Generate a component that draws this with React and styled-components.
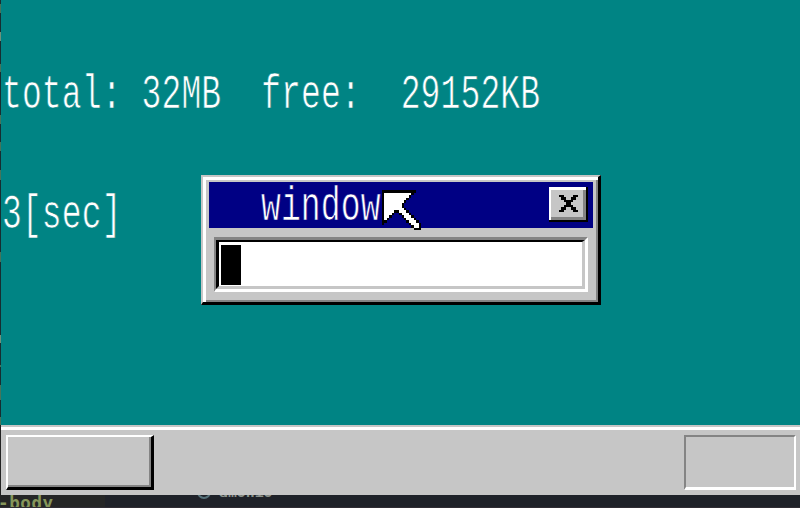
import React from "react";
import styled, { createGlobalStyle } from "styled-components";

const teal = "#008484";
const gray = "#c6c6c6";
const shade = "#848484";
const navy = "#000084";

const Global = createGlobalStyle`
  * { box-sizing: border-box; }
  body { margin: 0; overflow: hidden; background: #202229; }
`;

const Screen = styled.div`
  position: relative;
  width: 800px;
  height: 508px;
  overflow: hidden;
  display: flex;
  flex-direction: column;
  background: #202229;
`;

const Monitor = styled.div`
  height: 495px;
  display: flex;
`;

const Edge = styled.div`
  width: 1px;
  flex: none;
  background: linear-gradient(#172d31 0 4px, #47745a 4px 13px, #172d31 13px 32px, #70927b 32px 41px, #172d31 41px 64px, #47745a 64px 72px, #172d31 72px 115px, #47745a 115px 124px, #172d31 124px 142px, #47745a 142px 151px, #172d31 151px 170px, #47745a 170px 180px, #172d31 180px 252px, #47745a 252px 262px, #172d31 262px 335px, #70927b 335px 343px, #172d31 343px 365px, #47745a 365px 367px, #172d31 367px 385px, #47745a 385px 400px, #172d31 400px 417px, #47745a 417px 425px, #222 425px);
`;

const Desktop = styled.div`
  flex: 1;
  display: flex;
  flex-direction: column;
  background: ${teal};
`;

const Console = styled.div`
  flex: 1;
  display: flex;
  flex-direction: column;
  gap: 80px;
  padding: 76px 0 0 1px;
`;

const PixelText = styled.div`
  height: 40px;
  line-height: 40px;
  font-family: "Liberation Mono", monospace;
  font-size: 33px;
  letter-spacing: 0.13px;
  font-variant-ligatures: none;
  white-space: pre;
  color: #fff;
  -webkit-text-stroke: 0.5px ${(p) => p.$back || teal};
  transform: scaleY(1.48);
  transform-origin: 0 50%;
`;

const Taskbar = styled.div`
  height: 68px;
  display: flex;
  justify-content: space-between;
  align-items: flex-start;
  padding: 5px 4px 0 5px;
  background: ${gray};
  border-top: 3px solid #fff;
  box-shadow: 0 -2px 0 ${gray};
`;

const StartButton = styled.div`
  width: 148px;
  height: 55px;
  border: solid;
  border-width: 2px 3px 3px 2px;
  border-color: #fff #000 #000 #fff;
  box-shadow: inset -2px -2px 0 ${shade};
`;

const Tray = styled.div`
  width: 112px;
  height: 55px;
  border: solid;
  border-width: 2px 2px 3px 2px;
  border-color: ${shade} #fff #fff ${shade};
`;

const Win = styled.div`
  position: absolute;
  left: 201px;
  top: 175px;
  width: 400px;
  height: 130px;
  padding: 5px 5px 0 6px;
  background: ${gray};
  border: solid;
  border-width: 2px 3px 3px 2px;
  border-color: ${gray} #000 #000 ${gray};
  box-shadow: inset 3px 3px 0 #fff, inset -2px -2px 0 ${shade};
`;

const TitleBar = styled.div`
  height: 46px;
  display: flex;
  justify-content: space-between;
  align-items: flex-start;
  padding: 5px 5px 0 52px;
  background: ${navy};
`;

const Title = styled.div`
  height: 40px;
  margin-top: 1px;
`;

const CloseIcon = styled.svg`
  width: 39px;
  height: 35px;
  display: block;
`;

const Field = styled.div`
  width: 374px;
  height: 55px;
  margin: 9px 0 0 5px;
  border: solid;
  border-width: 3px 3px 3px 2px;
  border-color: ${shade} #fff #fff ${shade};
`;

const FieldInner = styled.div`
  height: 49px;
  padding: 3px 2px;
  background: #fff;
  border: solid;
  border-width: 2px 3px 3px;
  border-color: #000 ${gray} ${gray} #000;
`;

const Caret = styled.div`
  width: 20px;
  height: 40px;
  background: #000;
`;

const Pointer = styled.svg`
  position: absolute;
  left: 382px;
  top: 190px;
  width: 39px;
  height: 40px;
`;

const Footer = styled.div`
  height: 13px;
  display: flex;
  overflow: hidden;
  background: #1f2229;
  border-bottom: 1px solid #302d34;
`;

const FooterTab = styled.div`
  width: 105px;
  background: #252626;
  color: #86965b;
  font: bold 17.5px/16px "DejaVu Sans Mono", monospace;
  letter-spacing: 0.6px;
  text-indent: -2px;
`;

const FooterPane = styled.div`
  flex: 1;
  display: flex;
  padding-left: 92px;
  gap: 8px;
  color: #8b918b;
  font: bold 14.8px/14px "DejaVu Sans Mono", monospace;
`;

const Ring = styled.div`
  width: 14px;
  height: 14px;
  margin-top: -10px;
  border: 2px solid #56717a;
  border-radius: 50%;
`;

const FooterName = styled.span`
  margin-top: -10px;
`;

const pointerRows = [
  "**************..",
  "*OOOOOOOOOOO*...",
  "*OOOOOOOOOO*....",
  "*OOOOOOOOO*.....",
  "*OOOOOOOO*......",
  "*OOOOOOO*.......",
  "*OOOOOOO*.......",
  "*OOOOOOOO*......",
  "*OOOO**OOO*.....",
  "*OOO*..*OOO*....",
  "*OO*....*OOO*...",
  "*O*......*OOO*..",
  "**........*OOO*.",
  "*..........*OOO*",
  "............*OO*",
  ".............***",
];

const closeRows = [
  "OOOOOOOOOOOOOOO*",
  "OQQQQQQQQQQQQQ$*",
  "OQQQQQQQQQQQQQ$*",
  "OQQQ**QQQQ**QQ$*",
  "OQQQQ**QQ**QQQ$*",
  "OQQQQQ****QQQQ$*",
  "OQQQQQQ**QQQQQ$*",
  "OQQQQQ****QQQQ$*",
  "OQQQQ**QQ**QQQ$*",
  "OQQQ**QQQQ**QQ$*",
  "OQQQQQQQQQQQQQ$*",
  "OQQQQQQQQQQQQQ$*",
  "O$$$$$$$$$$$$$$*",
  "****************",
];

const inks = { "*": "#000", O: "#fff", Q: gray, $: shade };

// Each run of equal cells becomes one rectangle.
function Sprite({ rows }) {
  return rows.flatMap((row, y) =>
    [...row.matchAll(/(.)\1*/g)]
      .filter((m) => inks[m[1]])
      .map((m) => (
        <rect
          key={`${y}-${m.index}`}
          x={m.index}
          y={y}
          width={m[0].length}
          height="1"
          fill={inks[m[1]]}
          shapeRendering="crispEdges"
        />
      ))
  );
}

export default function App() {
  return (
    <Screen>
      <Global />
      <Monitor>
        <Edge />
        <Desktop>
          <Console>
            <PixelText>{"total: 32MB  free:  29152KB"}</PixelText>
            <PixelText>3[sec]</PixelText>
          </Console>
          <Taskbar>
            <StartButton />
            <Tray />
          </Taskbar>
        </Desktop>
      </Monitor>
      <Footer>
        <FooterTab>-body</FooterTab>
        <FooterPane>
          <Ring />
          <FooterName>amonio</FooterName>
        </FooterPane>
      </Footer>
      <Win>
        <TitleBar>
          <Title>
            <PixelText $back={navy}>window</PixelText>
          </Title>
          <CloseIcon viewBox="0 0 16 14" preserveAspectRatio="none">
            <Sprite rows={closeRows} />
          </CloseIcon>
        </TitleBar>
        <Field>
          <FieldInner>
            <Caret />
          </FieldInner>
        </Field>
      </Win>
      <Pointer viewBox="0 0 16 16" preserveAspectRatio="none">
        <Sprite rows={pointerRows} />
      </Pointer>
    </Screen>
  );
}
